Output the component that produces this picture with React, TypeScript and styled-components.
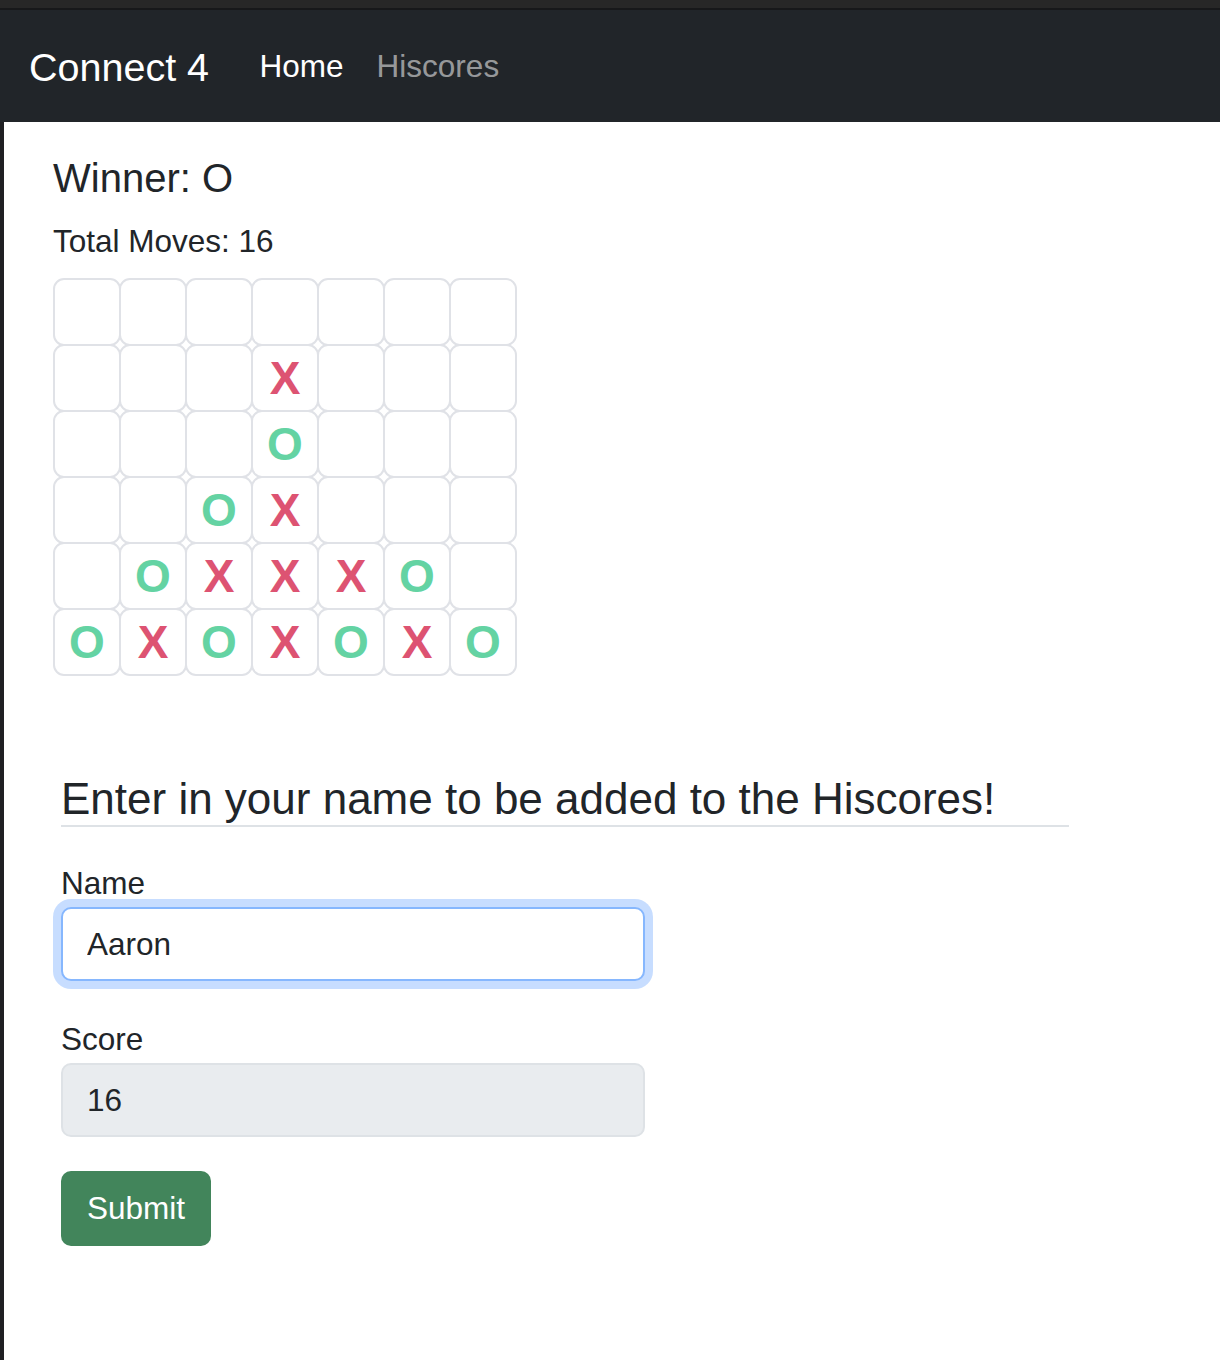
import * as React from "react"
import styled, { createGlobalStyle } from "styled-components"

type Mark = "" | "X" | "O"

const board: Mark[][] = [
  ["", "", "", "", "", "", ""],
  ["", "", "", "X", "", "", ""],
  ["", "", "", "O", "", "", ""],
  ["", "", "O", "X", "", "", ""],
  ["", "O", "X", "X", "X", "O", ""],
  ["O", "X", "O", "X", "O", "X", "O"]
]

export default () => (
  <Page>
    <GlobalStyle />
    <TopBar />
    <Navbar>
      <Brand>Connect 4</Brand>
      <NavLink active>Home</NavLink>
      <NavLink>Hiscores</NavLink>
    </Navbar>
    <Main>
      <Winner>Winner: O</Winner>
      <Moves>Total Moves: 16</Moves>
      <Board>
        {board.map((row, r) => (
          <BoardRow key={r}>
            {row.map((mark, c) => (
              <Cell key={c} mark={mark}>
                {mark}
              </Cell>
            ))}
          </BoardRow>
        ))}
      </Board>
      <Form>
        <Heading>Enter in your name to be added to the Hiscores!</Heading>
        <Label htmlFor="name">Name</Label>
        <Input id="name" type="text" defaultValue="Aaron" focused />
        <Label htmlFor="score">Score</Label>
        <Input id="score" type="text" value="16" readOnly disabled />
        <Submit type="button">Submit</Submit>
      </Form>
    </Main>
  </Page>
)

const GlobalStyle = createGlobalStyle`
  body {
    margin: 0;
    background: #fff;
    font-family: "Liberation Sans", Arial, sans-serif;
    color: #212529;
  }
`

const Page = styled.div`
  min-height: 1360px;
  display: flex;
  flex-direction: column;
`

const TopBar = styled.div`
  height: 8px;
  background: #272727;
  border-bottom: 2px solid #17181a;
`

const Navbar = styled.nav`
  height: 112px;
  background: #212529;
  display: flex;
  align-items: center;
  padding-left: 29px;
`

const Brand = styled.a`
  font-size: 39.5px;
  color: #fff;
  margin-right: 34px;
  padding-top: 2px;
`

const NavLink = styled.a<{ active?: boolean }>`
  font-size: 31.5px;
  padding: 0 16.5px;
  color: ${p => (p.active ? "#fff" : "rgba(255, 255, 255, 0.55)")};
`

const Main = styled.main`
  flex: 1;
  border-left: 4px solid #1f2023;
  padding: 32px 0 0 49px;
`

const Winner = styled.h5`
  margin: 0 0 16px;
  font-size: 40px;
  font-weight: 400;
  line-height: 48px;
`

const Moves = styled.p`
  margin: 0 0 13px;
  font-size: 31.5px;
  line-height: 47px;
`

const Board = styled.div`
  display: flex;
  flex-direction: column;
  padding-left: 1px;
  padding-top: 1px;
  width: 462px;
`

const BoardRow = styled.div`
  display: flex;
  height: 66px;
`

const Cell = styled.div<{ mark: Mark }>`
  box-sizing: border-box;
  flex: none;
  width: 68px;
  height: 68px;
  margin: -1px;
  border: 2px solid #e0e2e7;
  border-radius: 11px;
  display: flex;
  align-items: center;
  justify-content: center;
  font-size: 46px;
  font-weight: 700;
  color: ${p => (p.mark === "X" ? "#dd5372" : "#64d3a3")};
`

const Form = styled.form`
  margin-top: 98px;
  padding-left: 8px;
  display: flex;
  flex-direction: column;
  align-items: flex-start;
`

const Heading = styled.h4`
  margin: 0 0 33px;
  width: 1008px;
  font-size: 44px;
  font-weight: 400;
  line-height: 52px;
  border-bottom: 2px solid #dee2e6;
`

const Label = styled.label`
  font-size: 31.5px;
  line-height: 47px;
`

const Input = styled.input<{ focused?: boolean }>`
  box-sizing: border-box;
  width: 584px;
  height: 74px;
  margin-bottom: 35px;
  padding: 0 24px;
  font-family: inherit;
  font-size: 31.5px;
  color: #212529;
  background: #fff;
  border: 2px solid ${p => (p.focused ? "#86b7fe" : "#dee2e6")};
  border-radius: 10px;
  box-shadow: ${p => (p.focused ? "0 0 0 8px rgba(13, 110, 253, 0.23)" : "none")};
  outline: none;

  &:disabled {
    background: #e9ecef;
    opacity: 1;
    color: #212529;
  }
`

const Submit = styled.button`
  margin-top: -1px;
  width: 150px;
  height: 75px;
  border: none;
  border-radius: 10px;
  background: #42855b;
  color: #fff;
  font-family: inherit;
  font-size: 31.5px;
`
